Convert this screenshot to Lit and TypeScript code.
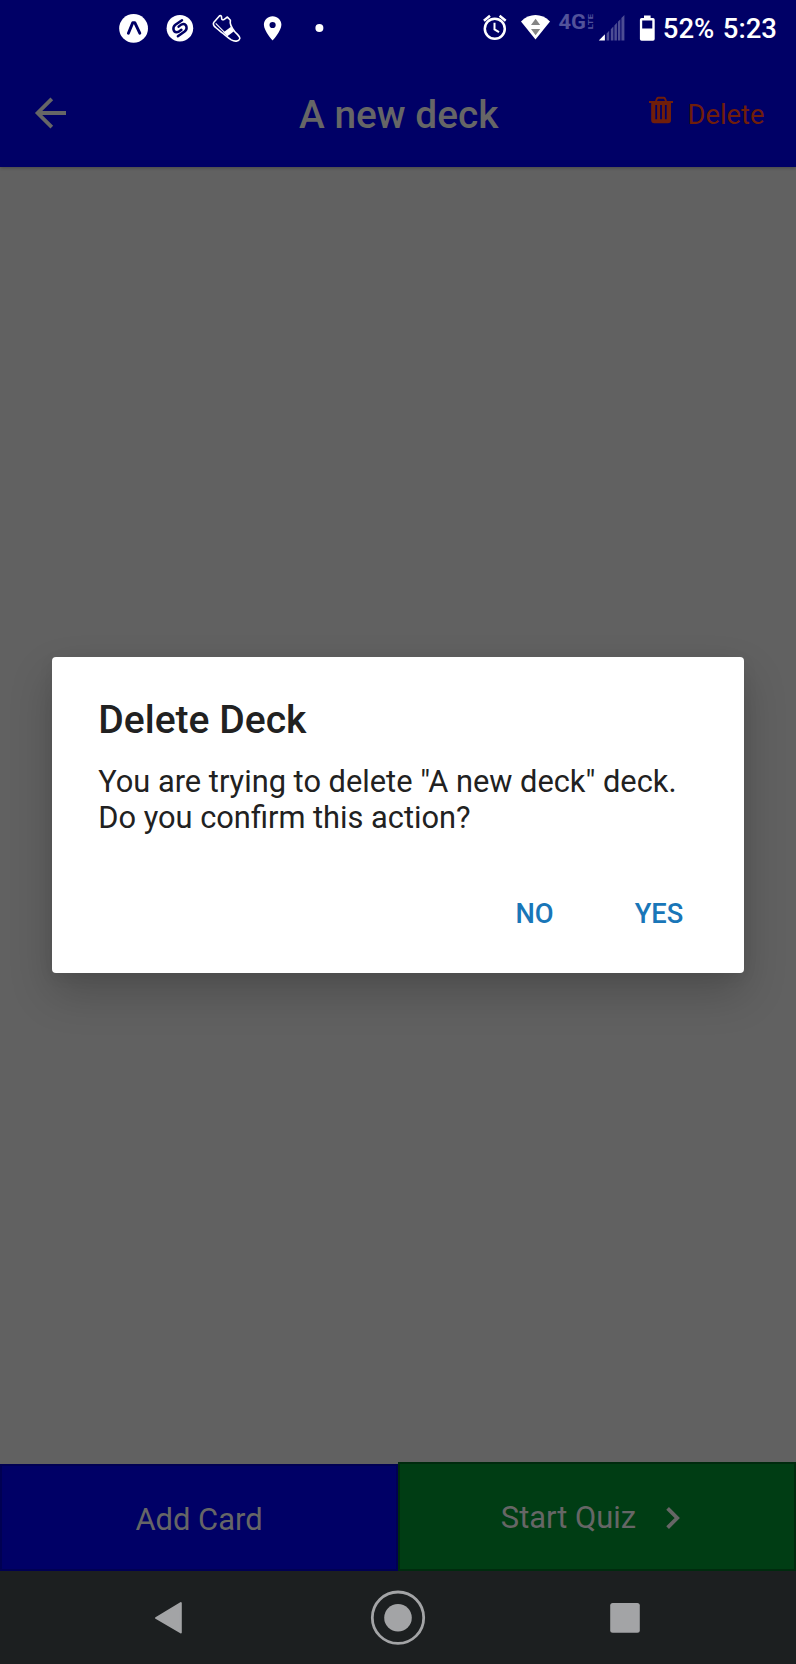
import { LitElement, html, css } from "lit";
import { customElement } from "lit/decorators.js";

@customElement("status-bar")
class StatusBar extends LitElement {
  static styles = css`
    :host { display: flex; justify-content: space-between; height: 56px; color: #fff; }
    svg { display: block; height: 56px; flex: none; }
    .notes { display: grid; grid-template-columns: repeat(5, 46.4px); padding-left: 110px; }
    .notes svg { width: 46.4px; }
    .system { display: flex; padding-right: 19px; }
    .text { font: 500 27.5px/56px Roboto, sans-serif; white-space: nowrap; margin-top: 1px; }
    .alarm { width: 30px; margin-right: 10px; }
    .wifi { width: 31px; margin-right: 7px; }
    .net { width: 38px; margin-right: 2px; }
    .signal { width: 27px; margin-right: 14px; }
    .battery { width: 17px; margin-right: 6.5px; }
    .time { margin-left: 8.5px; }
  `;
  render() {
    return html`
      <div class="notes">
        <svg viewBox="0 0 46.4 56">
          <circle cx="23.6" cy="28.4" r="14.4" fill="#fff" />
          <path d="M18.4 33.2 L22.8 22.6 H24.8 L29.8 33.2" fill="none" stroke="#000066" stroke-width="2.9" stroke-linecap="round" stroke-linejoin="round" />
        </svg>
        <svg viewBox="0 0 46.4 56">
          <circle cx="23.9" cy="28.2" r="13.3" fill="#fff" />
          <g fill="none" stroke="#000066" stroke-width="2.5" stroke-linecap="round">
            <path d="M26 20.2 L19.4 24.8 C16.1 27.4 17.2 32 20.6 32.3 C22.2 32.4 23.4 31.5 25.4 29.8" />
            <path d="M21.9 36.2 L28.6 31.6 C31.9 29 30.8 24.4 27.4 24.1 C25.8 24 24.6 24.9 22.6 26.6" />
          </g>
        </svg>
        <svg viewBox="0 0 46.4 56">
          <g fill="none" stroke="#fff" stroke-width="1.6" stroke-linejoin="round">
            <path d="M10.9 22.2 L16.6 15.8 C18 15 18.8 16.4 18.6 18 C18.5 19.7 20 20.3 21.2 19.3 L24.4 17 L27.4 20.2 C26.6 24.2 28.3 27.5 31.6 31.4 C34 34.2 37.3 36.6 36.8 38.6 C36 41.6 31.5 41.8 28.3 39.9 C24 37.2 21.5 34.4 18.5 32.3 L12.7 27.5 C10.4 25.7 9.8 23.5 10.9 22.2 Z" />
            <path d="M12.7 23.3 L21.3 32.2" stroke-width="1.1" />
          </g>
          <path d="M20.3 32.6 L28 26.7 L31 31.2 L24.4 36.2 Z" fill="#fff" />
        </svg>
        <svg viewBox="0 0 46.4 56">
          <path fill="#fff" fill-rule="evenodd" d="M23.6 16.2 C18.7 16.2 14.9 19.9 14.9 24.7 C14.9 31 23.6 40.4 23.6 40.4 C23.6 40.4 32.4 31 32.4 24.7 C32.4 19.9 28.5 16.2 23.6 16.2 Z M23.6 21.9 A3.1 3.1 0 1 1 23.6 28.1 A3.1 3.1 0 1 1 23.6 21.9 Z" />
        </svg>
        <svg viewBox="0 0 46.4 56"><circle cx="23.4" cy="28" r="4" fill="#fff" /></svg>
      </div>
      <div class="system">
        <svg class="alarm" viewBox="480 0 30 56">
          <g fill="none" stroke="#fff" stroke-width="2.5">
            <circle cx="494.8" cy="28.8" r="10" />
            <path d="M483.9 20.8 L490 15.8 M505.7 20.8 L499.6 15.8" />
            <path d="M494.5 22.8 V29.4 L499 32.2" stroke-width="2" />
          </g>
        </svg>
        <svg class="wifi" viewBox="520 0 31 56">
          <path fill="#fff" d="M521 21.4 C529.5 13 541.5 13 550 21.4 L535.5 39.4 Z" />
          <path fill="#858585" d="M531 25 L535.6 18.8 L540.2 25 Z M531 29 H540.2 L535.6 35.2 Z" />
        </svg>
        <svg class="net" viewBox="558 0 38 56" fill="#52529a" font-family="Roboto, sans-serif" font-weight="700">
          <text x="558.4" y="28.8" font-size="20.5" textLength="27.5" lengthAdjust="spacingAndGlyphs">4G</text>
          <text transform="translate(593.2 29.2) rotate(-90)" x="0" y="0" font-size="7.2" textLength="15.2" lengthAdjust="spacingAndGlyphs">LTE</text>
        </svg>
        <svg class="signal" viewBox="598 0 27 56">
          <path fill="#4d4d94" d="M606.6 33.4 L609.2 30.7 V40.5 H606.6 Z M610.8 29.2 L613.4 26.5 V40.5 H610.8 Z M614.4 25.4 L616.9 22.8 V40.5 H614.4 Z M617.9 21.8 L620.4 19.2 V40.5 H617.9 Z M621.4 18 L624.4 15 V40.5 H621.4 Z" />
          <path fill="#fff" d="M598.8 40.6 L604.9 34.2 V40.6 Z" />
        </svg>
        <svg class="battery" viewBox="639 0 17 56">
          <path fill="#fff" fill-rule="evenodd" d="M644 15.4 H650.6 V18 H653 Q654.7 18 654.7 19.7 V39 Q654.7 40.7 653 40.7 H641.6 Q639.9 40.7 639.9 39 V19.7 Q639.9 18 641.6 18 H644 Z M642.2 20.6 V28.6 H652.3 V20.6 Z" />
        </svg>
        <span class="text">52%</span>
        <span class="text time">5:23</span>
      </div>
    `;
  }
}

@customElement("deck-header")
class DeckHeader extends LitElement {
  static styles = css`
    :host {
      display: grid; grid-template-columns: 1fr auto 1fr; align-items: center;
      height: 111px; padding: 0 31.5px 0 34px;
      font-family: Roboto, sans-serif;
    }
    svg { display: block; }
    .title { font-size: 38.8px; line-height: 46px; font-weight: 500; color: #666; margin: 6px 0 0 -1px; }
    .remove { display: flex; justify-content: flex-end; align-items: center; color: #701e0a; font-size: 27.3px; line-height: 32px; }
    .remove svg { margin: -4px 15px 0 0; }
    .remove span { margin-top: 6px; }
    .back { margin-top: 3px; }
  `;
  render() {
    return html`
      <svg class="back" width="34" height="34" viewBox="0 0 34 34" fill="none" stroke="#666" stroke-width="3.8">
        <path d="M32 17 H4 M17.8 2.8 L3.6 17 L17.8 31.2" />
      </svg>
      <div class="title">A new deck</div>
      <div class="remove">
        <svg width="24" height="28" viewBox="0 0 24 28">
          <path d="M6.8 5.5 L8 2.6 Q8.4 1.7 9.4 1.7 H14.6 Q15.6 1.7 16 2.6 L17.2 5.5" fill="none" stroke="currentColor" stroke-width="1.9" />
          <path fill="currentColor" fill-rule="evenodd" d="M0 5 H24 V7 H22 V24 Q22 27.3 18.8 27.3 H5.4 Q2.2 27.3 2.2 24 V7 H0 Z M6.3 9 V23.2 H8.1 V9 Z M11.1 9 V23.2 H12.9 V9 Z M15.9 9 V23.2 H17.7 V9 Z" />
        </svg>
        <span>Delete</span>
      </div>
    `;
  }
}

@customElement("confirm-dialog")
class ConfirmDialog extends LitElement {
  static styles = css`
    :host {
      display: block; box-sizing: border-box; width: 692.5px; height: 316.5px;
      padding: 40px 46px 0 46.5px; background: #fff; border-radius: 4px;
      box-shadow: 0 20px 44px rgba(0, 0, 0, .2), 0 4px 16px rgba(0, 0, 0, .06);
      color: #212121; font-family: Roboto, sans-serif;
    }
    .title { font-size: 39.1px; line-height: 46px; font-weight: 500; }
    .message { font-size: 30.8px; line-height: 36px; margin-top: 21px; white-space: nowrap; }
    .actions {
      display: flex; justify-content: flex-end; gap: 81px; margin-top: 62px; padding-right: 15px;
      color: #1976b8; font-size: 27.3px; line-height: 32px; font-weight: 500;
    }
  `;
  render() {
    return html`
      <div class="title">Delete Deck</div>
      <div class="message">You are trying to delete "A new deck" deck.<br />Do you confirm this action?</div>
      <div class="actions"><span>NO</span><span>YES</span></div>
    `;
  }
}

@customElement("app-root")
class AppRoot extends LitElement {
  static styles = css`
    :host {
      display: flex; flex-direction: column; position: relative; width: 796px; height: 1664px;
      overflow: hidden; background: #616161; font-family: Roboto, sans-serif;
    }
    svg { display: block; }
    .top { background: #000066; box-shadow: 0 1px 3px rgba(0, 0, 0, .25); }
    .body { flex: 1; }
    .buttons { display: grid; grid-template-columns: 398px 398px; align-items: end; color: #666; font-size: 30.9px; line-height: 36px; }
    .button { box-sizing: border-box; display: flex; align-items: center; justify-content: center; }
    .add { height: 107.5px; background: #000066; border: 2px solid #000052; padding-top: 5px; }
    .quiz { height: 109.5px; background: #003d14; border: 2px solid #002b0e; padding: 4px 13px 0 0; }
    .quiz svg { margin: 0 0 1px 30px; }
    .nav { height: 93px; background: #1c1f20; }
    .scrim { position: absolute; inset: 0; display: flex; align-items: center; justify-content: center; }
    .scrim confirm-dialog { margin-top: -34px; }
  `;
  render() {
    return html`
      <div class="top">
        <status-bar></status-bar>
        <deck-header></deck-header>
      </div>
      <div class="body"></div>
      <div class="buttons">
        <div class="button add">Add Card</div>
        <div class="button quiz">
          <span>Start Quiz</span>
          <svg width="14" height="22" viewBox="0 0 14 22" fill="none" stroke="#666" stroke-width="3.8"><path d="M1.6 1.4 L11.2 11 L1.6 20.6" /></svg>
        </div>
      </div>
      <div class="nav">
        <svg width="796" height="93" viewBox="0 1571 796 93" fill="#a3a4a6">
          <path d="M156 1618 L180.8 1603 V1632.4 Z" stroke="#a3a4a6" stroke-width="2" stroke-linejoin="round" />
          <circle cx="398" cy="1617.7" r="13.8" />
          <circle cx="398" cy="1617.7" r="25.7" fill="none" stroke="#a3a4a6" stroke-width="2.8" />
          <rect x="610.2" y="1603" width="29.6" height="29.8" rx="2.5" />
        </svg>
      </div>
      <div class="scrim"><confirm-dialog></confirm-dialog></div>
    `;
  }
}
